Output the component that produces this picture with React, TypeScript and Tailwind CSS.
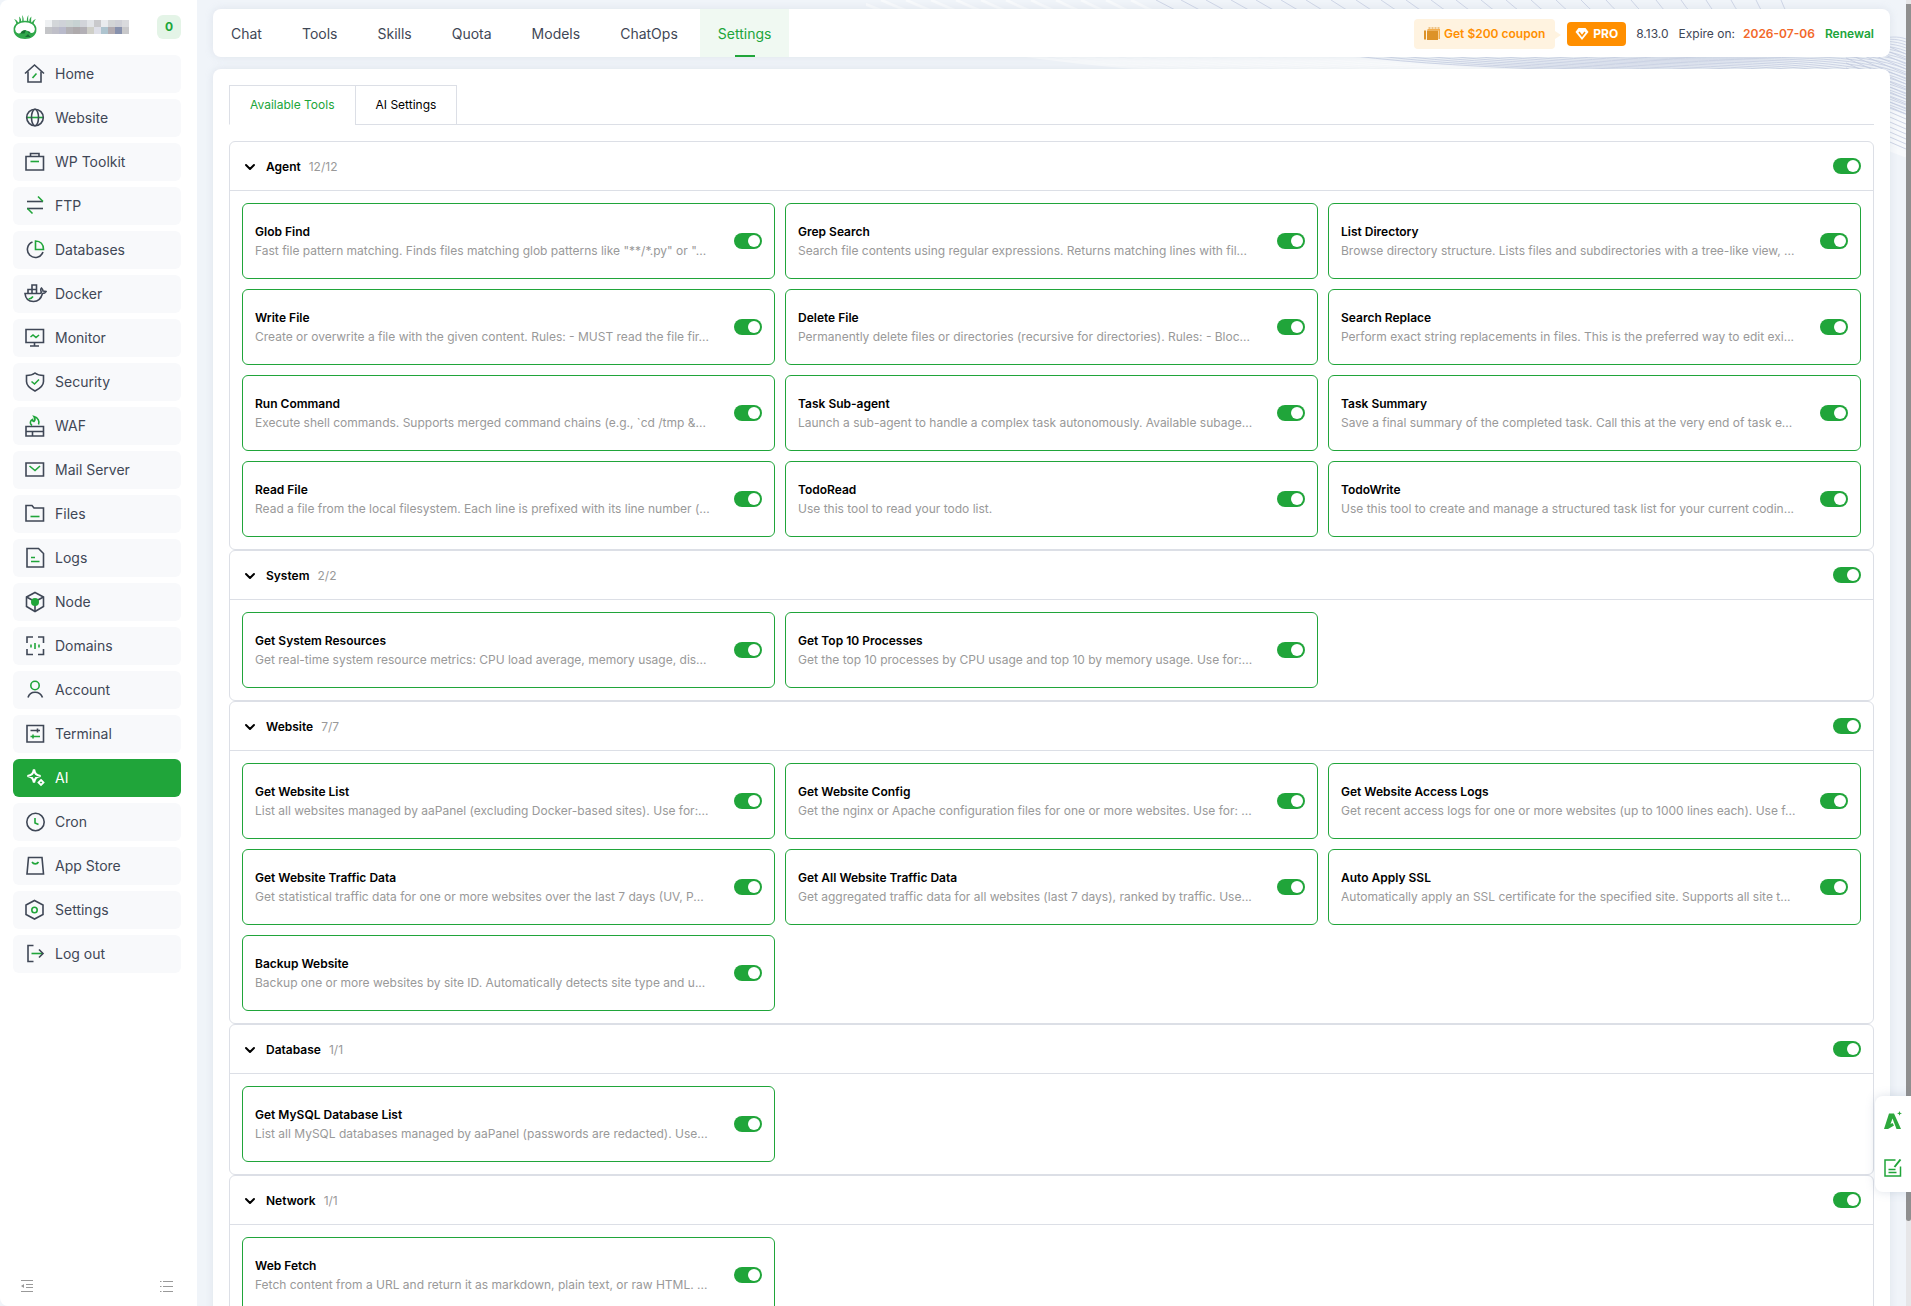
import type { ReactNode } from 'react'
import { useState } from 'react'
import { ChevronDown } from 'lucide-react'

interface Tool {
  name: string
  desc: string
}

interface ToolGroup {
  name: string
  tools: Tool[]
}

const groups: ToolGroup[] = [
  {
    name: 'Agent',
    tools: [
      { name: 'Glob Find', desc: 'Fast file pattern matching. Finds files matching glob patterns like "**/*.py" or "...' },
      { name: 'Grep Search', desc: 'Search file contents using regular expressions. Returns matching lines with fil...' },
      { name: 'List Directory', desc: 'Browse directory structure. Lists files and subdirectories with a tree-like view, ...' },
      { name: 'Write File', desc: 'Create or overwrite a file with the given content. Rules: - MUST read the file fir...' },
      { name: 'Delete File', desc: 'Permanently delete files or directories (recursive for directories). Rules: - Bloc...' },
      { name: 'Search Replace', desc: 'Perform exact string replacements in files. This is the preferred way to edit exi...' },
      { name: 'Run Command', desc: 'Execute shell commands. Supports merged command chains (e.g., `cd /tmp &...' },
      { name: 'Task Sub-agent', desc: 'Launch a sub-agent to handle a complex task autonomously. Available subage...' },
      { name: 'Task Summary', desc: 'Save a final summary of the completed task. Call this at the very end of task e...' },
      { name: 'Read File', desc: 'Read a file from the local filesystem. Each line is prefixed with its line number (...' },
      { name: 'TodoRead', desc: 'Use this tool to read your todo list.' },
      { name: 'TodoWrite', desc: 'Use this tool to create and manage a structured task list for your current codin...' },
    ],
  },
  {
    name: 'System',
    tools: [
      { name: 'Get System Resources', desc: 'Get real-time system resource metrics: CPU load average, memory usage, dis...' },
      { name: 'Get Top 10 Processes', desc: 'Get the top 10 processes by CPU usage and top 10 by memory usage. Use for:...' },
    ],
  },
  {
    name: 'Website',
    tools: [
      { name: 'Get Website List', desc: 'List all websites managed by aaPanel (excluding Docker-based sites). Use for:...' },
      { name: 'Get Website Config', desc: 'Get the nginx or Apache configuration files for one or more websites. Use for: ...' },
      { name: 'Get Website Access Logs', desc: 'Get recent access logs for one or more websites (up to 1000 lines each). Use f...' },
      { name: 'Get Website Traffic Data', desc: 'Get statistical traffic data for one or more websites over the last 7 days (UV, P...' },
      { name: 'Get All Website Traffic Data', desc: 'Get aggregated traffic data for all websites (last 7 days), ranked by traffic. Use...' },
      { name: 'Auto Apply SSL', desc: 'Automatically apply an SSL certificate for the specified site. Supports all site t...' },
      { name: 'Backup Website', desc: 'Backup one or more websites by site ID. Automatically detects site type and u...' },
    ],
  },
  {
    name: 'Database',
    tools: [
      { name: 'Get MySQL Database List', desc: 'List all MySQL databases managed by aaPanel (passwords are redacted). Use...' },
    ],
  },
  {
    name: 'Network',
    tools: [
      { name: 'Web Fetch', desc: 'Fetch content from a URL and return it as markdown, plain text, or raw HTML. ...' },
    ],
  },
]

// Menu icons: dark outline (currentColor) with a green accent
const menu: { label: string; icon: ReactNode }[] = [
  {
    label: 'Home',
    icon: (
      <>
        <path d="M1 10.500 10.500 2l9.500 8.500" />
        <path d="M4 8.500V19h13V8.500" />
        <path d="m8.500 15 4-4.500" stroke="#20a53a" />
      </>
    ),
  },
  {
    label: 'Website',
    icon: (
      <>
        <path d="M2.500 10.500h17" stroke="#20a53a" />
        <circle cx="11" cy="10.500" r="8.300" />
        <ellipse cx="11" cy="10.500" rx="3.500" ry="8.300" />
      </>
    ),
  },
  {
    label: 'WP Toolkit',
    icon: (
      <>
        <path d="M2 5.500h17.500V19H2z" />
        <path d="M6.500 5.500v-3h8.500v3" />
        <path d="M6.500 10.500h8.500" stroke="#20a53a" />
      </>
    ),
  },
  {
    label: 'FTP',
    icon: (
      <>
        <path d="M3 6.500h16" />
        <path d="M3 13.500h16" />
        <path d="m14 1.500 5 5" stroke="#20a53a" />
        <path d="m3.500 13.500 5 5" stroke="#20a53a" />
      </>
    ),
  },
  {
    label: 'Databases',
    icon: (
      <>
        <path d="M8.500 3a8 8 0 1 0 10.500 10" />
        <path d="M11.500 2v8.500H19.500C19.500 5.500 16.500 2 11.500 2z" stroke="#20a53a" />
      </>
    ),
  },
  {
    label: 'Docker',
    icon: (
      <>
        <path d="M1 10.500h14.500c1.500 0 2-1 1.500-2.500-.5-1.500 0-2.500.5-3 1 .8 1.500 2 1.500 3 1 0 2 0 3 .5-.8 1.500-2 2-3.500 2C17 16 14 18.500 9.500 18.500 4 18.500 1.500 15.500 1 10.500z" />
        <path d="M4 10.500v-4h4v4m0-4h4.500v4m-4.500-4V2h4.500v4.500m-4.500 0v4" />
        <path d="M4.500 16c2 0 3.500-1 4.500-2.500" stroke="#20a53a" />
      </>
    ),
  },
  {
    label: 'Monitor',
    icon: (
      <>
        <path d="M2 2.500h17.500V15.500H2z" />
        <path d="M10.500 15.500v3.500M6 19h9" />
        <path d="m6.500 10 2.500-2 3 2.500L15 8" stroke="#20a53a" />
      </>
    ),
  },
  {
    label: 'Security',
    icon: (
      <>
        <path d="M11 2c2.500 2 5 2.500 8.500 2.500v6c0 4-3.500 7-8.500 9.500-5-2.500-8.500-5.500-8.500-9.500v-6C6 4.500 8.500 4 11 2z" />
        <path d="m7.500 10.500 3 2.500 4.500-4.500" stroke="#20a53a" />
      </>
    ),
  },
  {
    label: 'WAF',
    icon: (
      <>
        <path d="M2 11.500h17.500v9.500H2zM2 16.500h17.500M8.500 16.500v5" />
        <path d="M8 10.500C5 8.500 6.500 5.500 8.500 4.500c0 1.500.5 2 1.500 2C11.500 5 11 3 10 1.500c4 1 6 5.500 4.500 8" stroke="#20a53a" />
      </>
    ),
  },
  {
    label: 'Mail Server',
    icon: (
      <>
        <path d="M2 4h17.500v13H2z" />
        <path d="m5.500 7 5.500 4.500L16 7" stroke="#20a53a" />
      </>
    ),
  },
  {
    label: 'Files',
    icon: (
      <>
        <path d="M2 2.500h6l2 2.500h9.500v13H2z" />
        <path d="M6.500 13.500h9" stroke="#20a53a" />
      </>
    ),
  },
  {
    label: 'Logs',
    icon: (
      <>
        <path d="M3 1.500h11.500l5 5V20H3z" />
        <path d="M7 10.500h4M7 14.500h8.500" stroke="#20a53a" />
      </>
    ),
  },
  {
    label: 'Node',
    icon: (
      <>
        <path d="m11 1.500 8.500 4.500v9.500L11 20.500 2.500 15.500V6z" />
        <path d="m2.500 6 8.500 4.500L19.500 6M11 10.500v10" />
        <circle cx="11" cy="11" r="4" fill="#20a53a" stroke="none" />
      </>
    ),
  },
  {
    label: 'Domains',
    icon: (
      <>
        <path d="M9 2H3v6M14 2h5.500v6M9 19.500H3V14M14 19.500h5.500V14" />
        <path d="M7 9.500v3M11 8v6M15 9.500v3" stroke="#20a53a" />
      </>
    ),
  },
  {
    label: 'Account',
    icon: (
      <>
        <circle cx="11" cy="6.500" r="4.200" stroke="#20a53a" />
        <path d="M4 18.500c2-7 12-7 14.500 0" />
      </>
    ),
  },
  {
    label: 'Terminal',
    icon: (
      <>
        <path d="M3 2.500h16.500V19H3z" />
        <path d="M6.500 7.500H16M13.500 5.500v4" />
        <path d="M6.500 13.500H16M9 11.500v4" stroke="#20a53a" />
      </>
    ),
  },
  {
    label: 'AI',
    icon: (
      <>
        <path d="M10 2.500C11 7 12 8 16.500 9 12 10 11 11 10 15.500 9 11 8 10 3.500 9 8 8 9 7 10 2.500z" strokeWidth="2.200" />
        <path d="m17 13 2.500 2.500L17 18l-2.500-2.500z" strokeWidth="1.800" />
      </>
    ),
  },
  {
    label: 'Cron',
    icon: (
      <>
        <circle cx="11.500" cy="11" r="8.700" />
        <path d="M11 7v5l3.500 1.500" stroke="#20a53a" />
      </>
    ),
  },
  {
    label: 'App Store',
    icon: (
      <>
        <path d="M4.500 2.500h13.500L19.500 19H3z" />
        <path d="M8 7c1.500 2.500 5 2.500 6.500 0" stroke="#20a53a" />
      </>
    ),
  },
  {
    label: 'Settings',
    icon: (
      <>
        <path d="m10.500 1.500 8.500 4.500v9.500L10.500 20 2 15.500V6z" />
        <circle cx="10.500" cy="11" r="2.700" stroke="#20a53a" />
      </>
    ),
  },
  {
    label: 'Log out',
    icon: (
      <>
        <path d="M9.500 2.500H4v16h5.500" />
        <path d="M7.500 10.500h11" stroke="#20a53a" />
        <path d="m15 6.500 4 4-4 4" />
      </>
    ),
  },
]

const navItems = ['Chat', 'Tools', 'Skills', 'Quota', 'Models', 'ChatOps', 'Settings']

// Blurred-out host name: two rows of grey blocks
const hostBlocks = [
  ['#eef0f2', '#d3d6d9', '#cfd2d8', '#cdd5d4', '#c7d2d2', '#d2d4da', '#e2e4e8', '#c9c9cc', '#e9ebee', '#d3d5d6', '#cfd0d6', '#d9dadd'],
  ['#c4c5c8', '#bfbfc8', '#b9bacb', '#b3b1b4', '#aeaaac', '#b3b0b6', '#cfcfc8', '#dedfe8', '#aec4cf', '#b2abb0', '#8791ad', '#c8c8ca'],
]

function Switch({ label }: { label: string }) {
  const [on, setOn] = useState(true)
  return (
    <input
      type="checkbox"
      role="switch"
      aria-label={label}
      checked={on}
      onChange={() => setOn(!on)}
      className="h-4 w-7 shrink-0 cursor-pointer appearance-none rounded-full bg-gray-300 p-0.5 before:block before:size-3 before:rounded-full before:bg-white checked:bg-[#20a53a] checked:before:ml-3"
    />
  )
}

function Logo() {
  return (
    <svg className="size-6" viewBox="0 0 24 24" fill="#2fa84a" aria-hidden="true">
      {/* leaves */}
      <path d="M1 4c2.500.5 4 2.500 4.500 5L3.500 10C3.500 7.500 2.500 5.500 1 4zM6 1.500c2 1.500 2.500 4 2 6l-2 .5c.5-2 .5-4.500 0-6.500zM9 0c1.500 2 2 4.500 1.500 7H9c.5-2.500.5-4.500 0-7zM15.500 0c-1.500 2-2 4.500-1.500 7h1.500c-.5-2.500-.5-4.500 0-7zM18.500 1.500c-2 1.500-2.500 4-2 6l2 .5c-.5-2-.5-4.500 0-6.500zM23 4c-2.500.5-4 2.500-4.500 5l2 1c0-2.500 1-4.500 2.500-6z" />
      {/* shell */}
      <ellipse cx="12" cy="14" rx="10.700" ry="7.500" fill="#ffffff" stroke="#2fa84a" strokeWidth="1.500" />
      <path d="M.5 15.500c3 3 5.500 3.500 7 2.500 1.500-3 6-4 9-.500 2 1 4.500.5 7-2C23 20.500 18 24 12 24S1 20.500.5 15.500z" />
      <path d="M7.500 18.500c1-2.500 3-3.500 5.500-3.500l-1.500 3.500zM12 22l3-3 2.500 3zM14.500 16l3 1-1.500 1.500z" fill="#176f31" />
    </svg>
  )
}

function Sidebar() {
  return (
    <aside className="flex w-[197px] shrink-0 flex-col rounded-tl-lg rounded-bl-lg bg-white">
      <div className="flex items-center pt-[15px] pr-4 pl-[13px]">
        <Logo />
        <div className="ml-2 grid w-[84px] grid-cols-12" aria-hidden="true">
          {hostBlocks.flat().map((color, i) => (
            <span key={i} className="h-[7px]" style={{ backgroundColor: color }} />
          ))}
        </div>
        <span className="ml-auto flex size-6 items-center justify-center rounded-md bg-[#e4f4e7] text-xs font-bold text-[#20a53a]">
          0
        </span>
      </div>

      <nav className="mt-4 flex flex-col gap-1.5 pr-4 pl-[13px]">
        {menu.map(item => (
          <a
            key={item.label}
            href="#"
            className={`flex h-[38px] items-center gap-2 rounded-md pl-[11px] text-sm ${
              item.label === 'AI' ? 'bg-[#20a53a] text-white' : 'bg-[#f8f9fb] text-[#3f4756]'
            }`}
          >
            <svg className="h-[22px] w-[23px]" viewBox="0 0 23 22" fill="none" stroke="currentColor" strokeWidth="1.600" aria-hidden="true">
              {item.icon}
            </svg>
            {item.label}
          </a>
        ))}
      </nav>

      <div className="mt-auto flex justify-between pr-[22px] pb-3 pl-5 text-[#999999]">
        <button type="button" aria-label="Collapse menu">
          <svg className="size-4" viewBox="0 0 16 16" fill="none" stroke="currentColor" aria-hidden="true">
            <path d="M1 2.500h12M6 6.500h7M6 9.500h7M1 13.500h12" />
            <path d="M1 8l3-2v4z" fill="currentColor" stroke="none" />
          </svg>
        </button>
        <button type="button" aria-label="Menu list">
          <svg className="size-4" viewBox="0 0 16 16" fill="none" stroke="currentColor" aria-hidden="true">
            <path d="M4 3.500h10M4 8.500h10M4 13.500h10" />
            <path d="M1 3.500h1.500M1 8.500h1.500M1 13.500h1.500" />
          </svg>
        </button>
      </div>
    </aside>
  )
}

function TopBar() {
  return (
    <header className="flex h-12 shrink-0 items-center justify-between rounded-lg bg-white pr-4 shadow-[0_0_8px_rgba(150,165,185,0.2)]">
      <nav className="flex h-full gap-1">
        {navItems.map(item => (
          <a
            key={item}
            href="#"
            className={`relative flex h-full items-center px-[18px] pt-0.5 text-sm ${
              item === 'Settings'
                ? 'bg-[#f0f9f2] text-[#20a53a] after:absolute after:bottom-0 after:left-1/2 after:h-0.5 after:w-5 after:-translate-x-1/2 after:bg-[#20a53a]'
                : 'text-[#3f4756]'
            }`}
          >
            {item}
          </a>
        ))}
      </nav>

      <div className="flex items-center pt-0.5 text-xs text-[#3f4756]">
        <a href="#" className="relative mr-3 flex h-[30px] items-center gap-1 rounded bg-[#fff3e0] px-2.5 font-semibold text-[#ff8f00]">
          <svg className="size-4" viewBox="0 0 16 16" aria-hidden="true">
            <path d="M3.500 3H16v10h-1.500V4.500h-11z" fill="#f5ad4b" />
            <path d="M0 4.500h2v9H0zM3 4.500h11v9.500H3z" fill="#dd9228" />
            <path d="M4.500 2h11v1" fill="none" stroke="#dd9228" strokeDasharray="2 1" />
          </svg>
          Get $200 coupon
          <span className="absolute top-3 left-full border-y-4 border-l-6 border-y-transparent border-l-[#fff3e0]" />
        </a>
        <span className="mr-2.5 flex h-6 items-center gap-1 rounded bg-[#ff8f00] px-2 font-bold text-white">
          <svg className="h-[14px] w-[14px]" viewBox="0 0 14 14" aria-hidden="true">
            <path d="M3.500 1h7L13.500 5 7 13 .5 5z" fill="#ffffff" />
            <path d="m4 5 3 4 3-4" fill="none" stroke="#ff8f00" strokeWidth="1.500" />
          </svg>
          PRO
        </span>
        <span>8.13.0</span>
        <span className="ml-2.5">Expire on:</span>
        <span className="ml-2 font-semibold text-[#f2682a]">2026-07-06</span>
        <a href="#" className="ml-2.5 font-semibold text-[#20a53a]">Renewal</a>
      </div>
    </header>
  )
}

function ToolSection({ group }: { group: ToolGroup }) {
  const total = group.tools.length
  return (
    <section className="rounded-md border border-[#dcdfe6]">
      <div className="flex h-[49px] items-center border-b border-[#dcdfe6] px-3">
        <button type="button" className="flex items-center gap-2 pt-0.5 text-xs text-black">
          <ChevronDown className="size-4" strokeWidth={3} />
          <span className="font-semibold">{group.name}</span>
          <span className="text-[#999999]">
            {total}/{total}
          </span>
        </button>
        <span className="ml-auto flex">
          <Switch label={`${group.name} tools`} />
        </span>
      </div>
      <div className="grid grid-cols-3 gap-2.5 p-3">
        {group.tools.map(tool => (
          <div key={tool.name} className="flex h-[76px] items-center justify-between gap-4 rounded-md border border-[#20a53a] px-3">
            <div className="min-w-0">
              <h3 className="text-xs leading-[19px] font-semibold text-black">{tool.name}</h3>
              <p className="truncate text-xs leading-[19px] text-[#999999]">{tool.desc}</p>
            </div>
            <Switch label={tool.name} />
          </div>
        ))}
      </div>
    </section>
  )
}

// Fine wave lines in the top right corner of the page background
function Waves() {
  return (
    <svg className="absolute top-0 right-0 h-40 w-[1040px]" viewBox="0 0 1040 160" fill="none" aria-hidden="true">
      {Array.from({ length: 40 }).map((_, i) => {
        const x = -60 + i * 25
        const end = 156 - i * 3
        return (
          <path
            key={i}
            d={`M${x} 0C${x + (1040 - x) * 0.25} ${120 - i} ${1040 - (1040 - x) * 0.25} ${end - (1040 - x) * 0.1} 1040 ${end}`}
            stroke={i < 14 ? '#ffffff' : '#c3cbe0'}
            strokeWidth={i < 14 ? 3 : 1}
            strokeOpacity={i < 14 ? 0.5 : 0.75}
          />
        )
      })}
      {/* lower edge of the wave, seen in the right gutter */}
      {[0, 1, 2, 3, 4, 5, 6, 7, 8, 9, 10, 11, 12, 13, 14, 15, 16, 17, 18, 19].map(i => (
        <path key={i} d={`M980 ${28 + i * 5}l60 26`} stroke="#c3cbe0" strokeOpacity="0.8" />
      ))}
    </svg>
  )
}

export default function App() {
  return (
    <div className="relative flex h-screen overflow-hidden bg-[#f0f4f9] font-['Inter',sans-serif]">
      <Sidebar />

      <div className="relative flex min-w-0 flex-1 flex-col px-4 pt-[9px]">
        <Waves />
        <div className="relative z-10 flex flex-col gap-3">
          <TopBar />
          <main className="rounded-lg bg-white p-4 shadow-[0_0_8px_rgba(150,165,185,0.2)]">
            <div className="flex text-xs">
              <button type="button" className="h-10 border border-r-0 border-[#dcdfe6] border-b-transparent px-5 text-[#20a53a]">
                Available Tools
              </button>
              <button type="button" className="h-10 border border-[#dcdfe6] px-5 text-black">
                AI Settings
              </button>
              <div className="flex-1 border-b border-[#dcdfe6]" />
            </div>
            <div className="mt-4">
              {groups.map(group => (
                <ToolSection key={group.name} group={group} />
              ))}
            </div>
          </main>
        </div>
      </div>

      {/* Page scrollbar */}
      <div className="w-[5px] shrink-0 bg-[#e6e6e8] pt-1">
        <div className="h-[93.5%] rounded-b bg-[#8f8f8f]" />
      </div>

      {/* Floating assistant buttons */}
      <div className="absolute right-0 bottom-[114px] z-20 flex h-24 w-9 flex-col items-center justify-around rounded-l-lg bg-white shadow-[0_0_10px_rgba(120,140,170,0.25)]">
        <button type="button" aria-label="AI assistant">
          <svg className="size-[18px]" viewBox="0 0 18 18" fill="none" aria-hidden="true">
            <path d="M0 18 5 2.500h5L17 18h-4.500L8.500 7.500 6.500 13l2-1 1.500 2.500L7.500 16 4 18z" fill="#2da83c" />
            <path d="m15.500 0 .7 1.700 1.800.7-1.800.7-.7 1.700-.7-1.700-1.800-.7 1.800-.7z" fill="#2da83c" />
          </svg>
        </button>
        <button type="button" aria-label="Feedback">
          <svg className="size-[18px]" viewBox="0 0 18 18" fill="none" stroke="#20a53a" strokeWidth="1.500" aria-hidden="true">
            <path d="M11.500 1H1v16h15.500V7.500" />
            <path d="M4.500 10.500h7M4.500 13.500h8" />
            <path d="m16.500.5-6 7.500" strokeWidth="2" />
          </svg>
        </button>
      </div>
    </div>
  )
}
